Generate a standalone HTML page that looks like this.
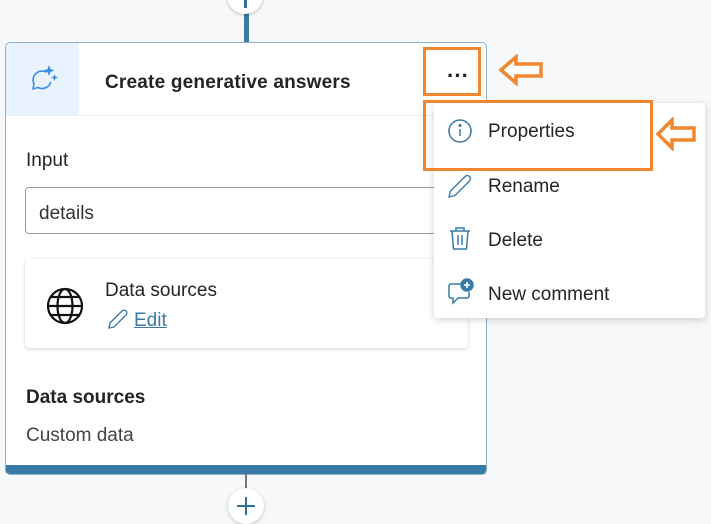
<!DOCTYPE html>
<html><head><style>
body{margin:0;width:711px;height:517px;background:#f6f8fa;position:relative;overflow:hidden;font-family:"Liberation Sans",sans-serif;color:#242424}
.a{position:absolute}
.t{font-size:19px;line-height:1}
</style></head><body>
<div class="a" style="left:244px;top:10px;width:5px;height:33px;background:#3a7aa6"></div>
<div class="a" style="left:227px;top:-22px;width:36px;height:36px;border-radius:50%;background:#fff;box-shadow:0 1px 3px rgba(0,0,0,.25)"></div>
<div class="a" style="left:244px;top:0;width:3px;height:8px;background:#2f6f99"></div>
<div class="a" style="left:5px;top:42px;width:480px;height:431px;background:#fff;border:1px solid #8fb3c9;border-radius:5px;overflow:hidden">
 <div class="a" style="left:0;top:0;width:73px;height:72px;background:#e9f3fd"></div>
 <div class="a" style="left:0;top:72px;width:480px;height:1px;background:#eee"></div>
 <svg class="a" style="left:22px;top:20px" width="32" height="32" viewBox="0 0 32 32"><path d="M18.5 9.2A9 9 0 0 0 6 21L5 26L10 24.5A9 9 0 0 0 22.8 19" fill="none" stroke="#3c8fe0" stroke-width="1.6" stroke-linejoin="round"/><path d="M21 2l1.5 4 4 1.5-4 1.5-1.5 4-1.5-4-4-1.5 4-1.5z" fill="#3c8fe0"/><path d="M26.5 11l1 2.5 2.5 1-2.5 1-1 2.5-1-2.5-2.5-1 2.5-1z" fill="#3c8fe0"/></svg>
 <div class="a t" style="left:99px;top:30px;font-weight:bold;color:#242424;letter-spacing:.2px">Create generative answers</div>
 <div class="a t" style="left:20px;top:108px">Input</div>
 <div class="a" style="left:19px;top:144px;width:460px;height:45px;border:1px solid #999;border-radius:4px"></div>
 <div class="a t" style="left:33px;top:161px;color:#333">details</div>
 <div class="a" style="left:19px;top:216px;width:443px;height:89px;border-radius:4px;box-shadow:0 1px 3px rgba(0,0,0,.2);background:#fff"></div>
 <svg class="a" style="left:40px;top:244px" width="38" height="38" viewBox="0 0 38 38" fill="none" stroke="#111" stroke-width="2.2"><circle cx="19" cy="19" r="17"/><ellipse cx="19" cy="19" rx="7.5" ry="17"/><path d="M2 19h34M5 10h28M5 28h28"/></svg>
 <div class="a t" style="left:99px;top:238px">Data sources</div>
 <svg class="a" style="left:101px;top:265px" width="22" height="22" viewBox="0 0 22 22" fill="none" stroke="#3a7aa6" stroke-width="1.4"><path d="M2 20l1-5L15 3a2.5 2.5 0 0 1 4 4L7 19z"/></svg>
 <div class="a t" style="left:128px;top:268px;color:#3a7aa6;text-decoration:underline">Edit</div>
 <div class="a t" style="left:20px;top:345px;font-weight:bold">Data sources</div>
 <div class="a t" style="left:20px;top:383px;color:#444">Custom data</div>
 <div class="a" style="left:0;top:422px;width:480px;height:9px;background:#3a7aa6"></div>
</div>
<div class="a" style="left:245px;top:474px;width:2px;height:18px;background:#777"></div>
<div class="a" style="left:228px;top:488px;width:36px;height:36px;border-radius:50%;background:#fff;box-shadow:0 1px 3px rgba(0,0,0,.25)"></div>
<div class="a" style="left:237px;top:505px;width:18px;height:2px;background:#2f6f99"></div>
<div class="a" style="left:245px;top:497px;width:2px;height:18px;background:#2f6f99"></div>
<div class="a" style="left:423px;top:47px;width:52px;height:43px;border:3px solid #f0862f;background:#fff"></div>
<div class="a" style="left:447px;top:63px;font-size:22px;font-weight:bold;letter-spacing:0px">&middot;&middot;&middot;</div>
<svg class="a" style="left:498px;top:54px" width="48" height="32" viewBox="0 0 48 32"><path d="M3 16L18 3v7h25v12H18v7z" fill="#fff" stroke="#f0862f" stroke-width="3.5" stroke-linejoin="miter"/></svg>
<div class="a" style="left:434px;top:103px;width:271px;height:215px;background:#fff;border-radius:4px;box-shadow:0 2px 8px rgba(0,0,0,.18)"></div>
<div class="a" style="left:423px;top:100px;width:224px;height:65px;border:3px solid #f0862f"></div>
<svg class="a" style="left:655px;top:117px" width="42" height="34" viewBox="0 0 42 34"><path d="M3 17L17 3v8h22v12H17v8z" fill="#fff" stroke="#f0862f" stroke-width="3.5"/></svg>
<svg class="a" style="left:447px;top:118px" width="26" height="26" viewBox="0 0 26 26" fill="none" stroke="#3a7aa6" stroke-width="1.5"><circle cx="13" cy="13" r="11"/><path d="M13 11v7"/><circle cx="13" cy="7.5" r=".8" fill="#3a7aa6"/></svg>
<div class="a t" style="left:488px;top:122px">Properties</div>
<svg class="a" style="left:447px;top:173px" width="26" height="26" viewBox="0 0 26 26" fill="none" stroke="#3a7aa6" stroke-width="1.4"><path d="M2 24l1.5-6L18 3.5a3 3 0 0 1 4.5 4.5L8 22.5z"/></svg>
<div class="a t" style="left:488px;top:177px">Rename</div>
<svg class="a" style="left:448px;top:226px" width="24" height="26" viewBox="0 0 24 26" fill="none" stroke="#3a7aa6" stroke-width="1.5"><path d="M2 5h20M8 5V2h8v3M4 5l1.5 18h13L20 5M10 9v10M14 9v10"/></svg>
<div class="a t" style="left:488px;top:231px">Delete</div>
<svg class="a" style="left:447px;top:278px" width="28" height="28" viewBox="0 0 28 28" fill="none" stroke="#3a7aa6" stroke-width="1.5"><path d="M14 6H4a2 2 0 0 0-2 2v10a2 2 0 0 0 2 2h2v5l5-5h9a2 2 0 0 0 2-2v-4"/><circle cx="20" cy="7" r="6" fill="#3a7aa6"/><path d="M20 4v6M17 7h6" stroke="#fff" stroke-width="1.6"/></svg>
<div class="a t" style="left:488px;top:285px">New comment</div>
</body></html>
